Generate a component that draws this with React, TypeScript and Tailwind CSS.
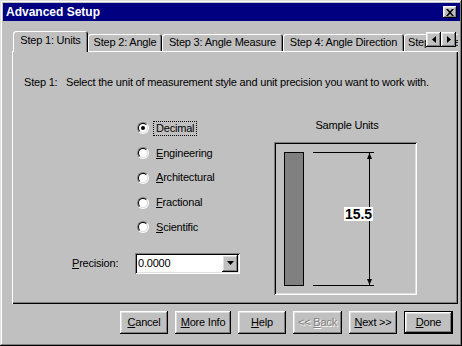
import * as React from "react";

const raised =
  "shadow-[inset_-1px_-1px_#000,inset_1px_1px_#fff,inset_-2px_-2px_#808080,inset_2px_2px_#dfdfdf]";
const sunken =
  "shadow-[inset_1px_1px_#808080,inset_-1px_-1px_#fff,inset_2px_2px_#000,inset_-2px_-2px_#dfdfdf]";

function U({ children }: { children: React.ReactNode }) {
  return <span className="underline underline-offset-[1px]">{children}</span>;
}

function Radio({ checked, label, focus }: { checked?: boolean; label: React.ReactNode; focus?: boolean }) {
  return (
    <div className="flex h-[24.75px] items-center">
      <div className="flex h-[12px] w-[12px] items-center justify-center rounded-full border border-t-[#808080] border-l-[#808080] border-b-white border-r-white">
        <div className="flex h-[10px] w-[10px] items-center justify-center rounded-full border border-t-black border-l-black border-b-[#dfdfdf] border-r-[#dfdfdf] bg-white">
          {checked && <div className="h-[4px] w-[4px] rounded-full bg-black" />}
        </div>
      </div>
      <span
        className={
          "ml-[5px] px-[2px] leading-[13px] " +
          (focus ? "outline outline-1 outline-dotted outline-black" : "outline outline-1 outline-transparent")
        }
      >
        {label}
      </span>
    </div>
  );
}

function Button({ children, w, isDefault, disabled }: { children: React.ReactNode; w: string; isDefault?: boolean; disabled?: boolean }) {
  return (
    <div
      className={
        "flex h-[23px] items-center justify-center bg-[#c0c0c0] " +
        w +
        " " +
        (isDefault ? "border border-black " : "") +
        raised
      }
    >
      <span className={disabled ? "text-[#808080] [text-shadow:1px_1px_0_#fff]" : "text-black"}>{children}</span>
    </div>
  );
}

function Tab({ label, w, selected }: { label: string; w: string; selected?: boolean }) {
  return (
    <div
      className={
        "flex shrink-0 items-center justify-center whitespace-nowrap rounded-t-[3px] bg-[#c0c0c0] " +
        w +
        " " +
        (selected
          ? "relative z-10 h-[21px] pb-[2px] shadow-[inset_1px_1px_#fff,inset_-1px_0_#000,inset_-2px_0_#808080]"
          : "mb-px h-[17px] shadow-[inset_1px_1px_#fff,inset_-1px_0_#000,inset_-2px_0_#808080]")
      }
    >
      {label}
    </div>
  );
}

function Arrow({ dir }: { dir: "left" | "right" | "down" }) {
  if (dir === "down")
    return (
      <svg width="7" height="4" viewBox="0 0 7 4">
        <polygon points="0,0 7,0 3.5,4" fill="#000" />
      </svg>
    );
  return (
    <svg width="4" height="7" viewBox="0 0 4 7">
      <polygon points={dir === "left" ? "4,0 4,7 0,3.5" : "0,0 0,7 4,3.5"} fill="#000" />
    </svg>
  );
}

export default function App() {
  return (
    <div
      className={
        "flex h-[346px] w-[462px] flex-col bg-[#c0c0c0] p-[3px] font-['Liberation_Sans',Arial,sans-serif] text-[11px] tracking-[-0.2px] text-black " +
        "shadow-[inset_-1px_-1px_#000,inset_1px_1px_#dfdfdf,inset_-2px_-2px_#808080,inset_2px_2px_#fff]"
      }
    >
      {/* Title bar */}
      <div className="-mr-px flex h-[18px] items-center justify-between bg-[#000080] pl-[3px] pr-[3px]">
        <span className="text-[12px] font-bold tracking-normal text-white">Advanced Setup</span>
        <div className={"flex h-[12px] w-[14px] items-center justify-center bg-[#c0c0c0] " + raised}>
          <svg width="8" height="7" viewBox="0 0 8 7">
            <path d="M0 0h2l2 2.2L6 0h2L5 3.5 8 7H6L4 4.8 2 7H0l3-3.5z" fill="#000" />
          </svg>
        </div>
      </div>

      <div className="mt-[10px] flex flex-col pl-[9px] pr-[1px]">
        {/* Tabs */}
        <div className="relative z-10 flex h-[21px] items-end overflow-hidden">
          <div className="ml-px flex items-end">
            <Tab label="Step 1: Units" w="w-[75px]" selected />
            <Tab label="Step 2: Angle" w="w-[74px]" />
            <Tab label="Step 3: Angle Measure" w="w-[121px]" />
            <Tab label="Step 4: Angle Direction" w="w-[121px]" />
            <Tab label="Step 5: Area" w="px-[4px]" />
          </div>
          <div className="absolute right-[2px] top-px z-20 flex">
            <div className={"flex h-[15px] w-[15px] items-center justify-center bg-[#c0c0c0] " + raised}>
              <Arrow dir="left" />
            </div>
            <div className={"flex h-[15px] w-[15px] items-center justify-center bg-[#c0c0c0] " + raised}>
              <Arrow dir="right" />
            </div>
          </div>
        </div>

        {/* Panel */}
        <div className="-mt-px flex h-[253px] flex-col shadow-[inset_1px_1px_#fff,inset_-1px_-1px_#000,inset_-2px_-2px_#808080]">
          <p className="pl-[12px] pt-[25px] leading-[13px]">
            Step 1:&nbsp;&nbsp; Select the unit of measurement style and unit precision you want to work with.
          </p>

          <div className="mt-[27px] flex pl-[60px]">
            <div className="flex w-[168px] flex-col">
              <div className="flex flex-col pl-[65px]">
                <Radio checked focus label="Decimal" />
                <Radio label={<><U>E</U>ngineering</>} />
                <Radio label={<><U>A</U>rchitectural</>} />
                <Radio label={<><U>F</U>ractional</>} />
                <Radio label={<><U>S</U>cientific</>} />
              </div>
              <div className="mt-[13px] flex items-center">
                <span className="w-[63px]">
                  <U>P</U>recision:
                </span>
                <div className={"flex h-[21px] w-[105px] items-center justify-between bg-white pl-[3px] pr-[2px] " + sunken}>
                  <span>0.0000</span>
                  <div className={"flex h-[17px] w-[16px] items-center justify-center bg-[#c0c0c0] " + raised}>
                    <Arrow dir="down" />
                  </div>
                </div>
              </div>
            </div>

            <div className="ml-[34px] flex w-[143px] flex-col">
              <div className="flex h-[18px] items-center justify-center pl-[3px]">Sample Units</div>
              <div className={"relative mt-[8px] h-[153px] w-[143px] " + sunken}>
                <svg width="143" height="153" viewBox="0 0 143 153" className="absolute left-0 top-0">
                  <rect x="10.5" y="10.5" width="19" height="133" fill="#808080" stroke="#000" />
                  <line x1="39" y1="10.5" x2="100" y2="10.5" stroke="#000" />
                  <line x1="39" y1="143.5" x2="100" y2="143.5" stroke="#000" />
                  <line x1="95.5" y1="11" x2="95.5" y2="143" stroke="#000" />
                  <polygon points="95.5,11 93,17 98,17" fill="#000" />
                  <polygon points="95.5,143 93,137 98,137" fill="#000" />
                </svg>
                <span className="absolute left-[70px] top-[65px] h-[14px] w-[29px] bg-white text-center text-[14px] font-bold leading-[14px] tracking-normal">
                  15.5
                </span>
              </div>
            </div>
          </div>
        </div>

        {/* Buttons */}
        <div className="mt-[7px] flex justify-end gap-[7px] pr-[5px]">
          <Button w="w-[48px]"><U>C</U>ancel</Button>
          <Button w="w-[56px]"><U>M</U>ore Info</Button>
          <Button w="w-[48px]"><U>H</U>elp</Button>
          <Button w="w-[49px]" disabled>&lt;&lt; <U>B</U>ack</Button>
          <Button w="w-[48px]"><U>N</U>ext &gt;&gt;</Button>
          <Button w="w-[49px]" isDefault><U>D</U>one</Button>
        </div>
      </div>
    </div>
  );
}
